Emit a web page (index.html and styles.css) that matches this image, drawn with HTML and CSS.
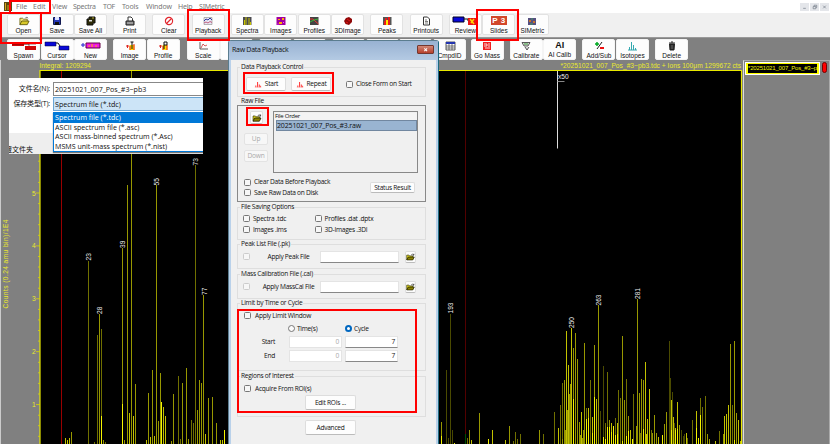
FILE: index.html
```html
<!DOCTYPE html>
<html lang="en">
<head>
<meta charset="utf-8">
<title>Raw Data Playback</title>
<link rel="stylesheet" href="styles.css">
</head>
<body>
<svg class="defs" width="0" height="0">
  <symbol id="folder" viewBox="0 0 12 10"><path d="M1 9V2h3l1 1h4v2" fill="#f5e87a" stroke="#6d6510" stroke-width=".9"/><path d="M1 9l2-4h8L9 9z" fill="#d8c929" stroke="#57500a" stroke-width=".9"/><path d="M7 1.500q2-1.500 3 .5" fill="none" stroke="#333" stroke-width=".7"/></symbol>
  <symbol id="darkfolder" viewBox="0 0 12 10"><path d="M1 9V2.500h3l1 1h4V5" fill="#e7dd20" stroke="#333000" stroke-width=".9"/><path d="M1 9l2-4h8L9 9z" fill="#8b8200" stroke="#222000" stroke-width="1"/><path d="M7 2q2-2 3.500 .5M10.500 .5v2H9" fill="none" stroke="#111" stroke-width=".8"/></symbol>
  <symbol id="redbars" viewBox="0 0 8 8"><path d="M1.500 7V5M3.500 7V1M5.500 7V4M7 7V5.500" stroke="#ff3b3b" stroke-width="1.200"/><path d="M0 7h8" stroke="#ff8a8a" stroke-width=".6"/></symbol>
</svg>
<div class="app">
  <div class="menubar">
    <svg class="appicon" viewBox="0 0 8 9"><path d="M0 0h8v9H0z" fill="#5a4a10"/><path d="M1.500 1v7M4 3v5M6 1v7" stroke="#d9a820"/></svg>
    <span class="m-file">File</span><span class="m-edit">Edit</span><span class="m-view">View</span><span class="m-spectra">Spectra</span><span class="m-tof">TOF</span><span class="m-tools">Tools</span><span class="m-window">Window</span><span class="m-help">Help</span><span class="m-si">SIMetric</span>
    <div class="winbtns"><i><svg viewBox="0 0 9 9"><path d="M3 6h3"/></svg></i><i><svg viewBox="0 0 9 9"><path d="M3 4h3v2.500H3zM4 4V2.500h3V5H6"/></svg></i><i><svg viewBox="0 0 9 9"><path d="M3 3l3 3M6 3L3 6"/></svg></i></div>
  </div>

  <div class="toolbar main">
    <div class="tb"><svg viewBox="0 0 14 10"><use href="#folder" x="2" width="11" height="10"/></svg>Open</div>
    <div class="tb"><svg viewBox="0 0 14 10"><path d="M3.500 1.500h7v7h-7z" fill="#2638b8" stroke="#101850"/><path d="M5 1h4v3H5z" fill="#dfe4ff"/><path d="M5 6h4v3H5z" fill="#111"/></svg>Save</div>
    <div class="tb"><svg viewBox="0 0 14 10"><path d="M5 1h6v6H9v2H3V3h2z" fill="#2d2b08" stroke="#111"/><path d="M5 4h3v1.500H5z" fill="#ddd"/><path d="M8 2h2" stroke="#b5ae30"/></svg>Save All</div>
    <div class="tb gap6"><svg viewBox="0 0 14 10"><path d="M5 5V1h3l1.500 1.500V5" fill="#fff" stroke="#333"/><path d="M3 5h8v4H3z" fill="#777" stroke="#222"/><path d="M4 7h6" stroke="#ddd" stroke-width=".7"/></svg>Print</div>
    <div class="tb gap6"><svg viewBox="0 0 14 10"><circle cx="7" cy="5" r="3.600" fill="#fff" stroke="#e2262d" stroke-width="1.200"/><path d="M9.500 2.500l-5 5" stroke="#e2262d" stroke-width="1.200"/></svg>Clear</div>
    <div class="tb gap6"><svg viewBox="0 0 14 10"><path d="M3 1.500h8v7H3z" fill="#e8e8f5" stroke="#888" stroke-width=".6"/><path d="M3 5l2-2 2 1 2-2 2 2" fill="none" stroke="#3038a0"/><path d="M3 7l2-1 2 1 2-1.500 2 1" fill="none" stroke="#c26080"/></svg>Playback</div>
    <div class="tb gap6"><svg viewBox="0 0 14 10"><path d="M3 1h8.500v8H3z" fill="#4b4b50"/><path d="M4.500 9V4M6 9V1M9 9V2M10.500 9V6" stroke="#c8c400"/></svg>Spectra</div>
    <div class="tb"><svg viewBox="0 0 14 10"><path d="M2.500 1h9v8h-9z" fill="#a000a0"/><path d="M4 3h2v1H4zM8 2h2v2H8zM5 6h3v2H5z" fill="#ffb000"/><path d="M9 6l1 1M3.500 8h1" stroke="#f5f"/></svg>Images</div>
    <div class="tb"><svg viewBox="0 0 14 10"><path d="M3 1h8.500v8H3z" fill="#444"/><path d="M3 3h3l2 2 3.500 3" fill="none" stroke="#e33"/><path d="M3 6l4-2 4-1" fill="none" stroke="#39b839"/></svg>Profiles</div>
    <div class="tb"><svg viewBox="0 0 14 10"><path d="M5 2l3-1 3 2v3L8 9 4.500 8 3 5z" fill="#8f0808"/><path d="M6 3l3 2M5 6l2 1" stroke="#e41414"/></svg>3DImage</div>
    <div class="tb gap6"><svg viewBox="0 0 14 10"><path d="M3 1h8.500v8H3z" fill="#555"/><path d="M4 9V5h1V2h2v3h1V1h2v8z" fill="#e81c1c"/><path d="M6 9V4h2v5z" fill="#ffe800"/></svg>Peaks</div>
    <div class="tb gap6"><svg viewBox="0 0 14 10"><path d="M4.500 1h4l2 2v6h-6z" fill="#fff" stroke="#333"/><path d="M6 4h2M6 5.500h3M6 7h3" stroke="#444" stroke-width=".7"/></svg>Printouts</div>
    <div class="tb gap6"><svg class="wide" viewBox="0 0 26 10"><path d="M1 1h11v5H1z" fill="#0808d8" stroke="#002"/><path d="M12 3h4v2" fill="none" stroke="#111"/><path d="M16 2h8v7h-8z" fill="#e81515"/><path d="M18 3l4 5M22 3l-3 4" stroke="#ffd500" stroke-width="1.500"/></svg>Review</div>
    <div class="tb"><div class="ppt"><b>P</b><b>3</b></div>Slides</div>
    <div class="tb"><svg viewBox="0 0 14 10"><path d="M3 2h8v7H3z" fill="#575080"/><path d="M4 4h2v2H4zM8 5h2v2H8z" fill="#c9722a"/><path d="M6 3h2M5 8h3" stroke="#47a060"/></svg>SIMetric</div>
  </div>

  <div class="toolbar second">
    <div class="tb"><svg class="wide" viewBox="0 0 26 10"><path d="M1 1h12v4H1z" fill="#d00808"/><path d="M14 5h11v4H14z" fill="#d00808"/><path d="M13 3h5v2M1 3h24" fill="none" stroke="#400" stroke-width=".6"/></svg>Spawn</div>
    <div class="tb"><svg class="wide" viewBox="0 0 26 10"><path d="M1 1h11v4H1zM15 5h10v4H15z" fill="#0808d8" stroke="#003" stroke-width=".5"/><path d="M12 2h2l2 3" fill="none" stroke="#111"/></svg>Cursor</div>
    <div class="tb"><svg class="wide" viewBox="0 0 26 10"><path d="M3 4h4M5 2v4" stroke="#2020d0"/><path d="M8 2h14v5H8z" fill="#f014e8" stroke="#604"/><path d="M11 6V4M14 6V3M18 6V4" stroke="#ffb900"/></svg>New</div>
    <div class="tb gap6"><svg viewBox="0 0 14 10"><path d="M3 5h3M4.500 4v3" stroke="#d22"/><path d="M6.500 9V4h5v5z" fill="#ffe000"/><path d="M7 9V5M11 9V3" stroke="#e22"/><path d="M9 8V1M7.500 1h3" stroke="#111"/></svg>Image</div>
    <div class="tb"><svg viewBox="0 0 14 10"><path d="M3 5h3M4.500 4v3" stroke="#d22"/><path d="M6.500 9V4h5v5z" fill="#ffe000"/><path d="M7 9V5M11 9V4" stroke="#e22"/><path d="M8 8V1h3v3H8" fill="none" stroke="#111"/></svg>Profile</div>
    <div class="tb gap7"><svg viewBox="0 0 14 10"><path d="M4 1v7h8" fill="none" stroke="#333" stroke-width=".8"/><path d="M5 7l2-4 2 2 2-1" fill="none" stroke="#c33" stroke-width=".8"/></svg>Scale</div>
    <div class="tb"></div><div class="tb gap6"></div><div class="tb"></div><div class="tb gap6"></div><div class="tb"></div><div class="tb fill"></div>
    <div class="tb cmp"><svg viewBox="0 0 14 10"><path d="M3 1h9v8H3z" fill="#fff" stroke="#333" stroke-width=".8"/><path d="M3 2h9" stroke="#2436b0" stroke-width="2"/><path d="M3 5h9M3 7h9M6 3v6M9 3v6" stroke="#444" stroke-width=".7"/></svg>CmpdID</div>
    <div class="tb gap4"><svg viewBox="0 0 14 10"><path d="M3 1h8v8H3z" fill="#ef2020"/><path d="M4 3h3v2H4M9 2v4M5 7h5" fill="none" stroke="#fff" stroke-width=".8"/></svg>Go Mass</div>
    <div class="tb gap6"><svg viewBox="0 0 14 10"><path d="M3 1.500h8L9 5H5zM6 6l2 3 2-3" fill="#ddd" stroke="#333" stroke-width=".8"/><path d="M5 3h4" stroke="#393"/></svg>Calibrate</div>
    <div class="tb"><div class="ai">AI</div>AI Calib</div>
    <div class="tb gap6"><svg viewBox="0 0 14 10"><path d="M3 3h4M5 1v4" stroke="#0a2" stroke-width="1.500"/><path d="M10 1L5 8" stroke="#222"/><path d="M8 7h4" stroke="#e11" stroke-width="2"/></svg>Add/Sub</div>
    <div class="tb"><svg viewBox="0 0 14 10"><path d="M3 9h9M4.500 9V6M6.500 9V1M8.500 9V4M10.500 9V7" stroke="#35a9b0"/></svg>Isotopes</div>
    <div class="tb gap6"><svg viewBox="0 0 14 10"><path d="M4 2h6M6 1h2M4.500 3h5L9 9H5z" fill="#222" stroke="#222"/><path d="M6.300 4v4M7.700 4v4" stroke="#888" stroke-width=".5"/></svg>Delete</div>
  </div>

  <div class="workspace">
    <div class="plotpane">
      <svg class="plot" id="plot" viewBox="0 60 743 384" width="743" height="384">
        <path d="M40 71h702v373H40z" fill="#000"/>
        <path d="M61.500 71V444" stroke="#990000"/>
        <path d="M465.500 71V444" stroke="#520000"/>
        <g id="bars"></g>
        <path d="M40 444V70.500H741.500V444" fill="none" stroke="#e8e800" stroke-width="1.200"/>
        <g id="ticks"></g>
        <path d="M557.500 71V148.500" stroke="#ddd"/><path d="M557.500 81.500h7" stroke="#888"/>
        <text x="558" y="79" class="white">x50</text>
        <text x="39.500" y="68" class="yl" textLength="51.500">Integral: 1209294</text>
        <text x="560.500" y="68" class="yl" textLength="180.500">*20251021_007_Pos_#3~pb3.tdc + Ions 100μm 1299672 cts</text>
        <text transform="translate(7.500 308.500) rotate(-90)" class="yl" textLength="89">Counts (0.24 amu bin)/1E4</text>
        <path d="M.5 60V444" stroke="#ccc"/>
      </svg>
    </div>
    <div class="side">
      <div class="chip"><span>*20251021_007_Pos_#3~p</span></div>
      <div class="dot"></div>
    </div>
  </div>

  <div class="filepop">
    <div class="frow"><label>文件名(N):</label><div class="fld">20251021_007_Pos_#3~pb3</div></div>
    <div class="frow type"><label>保存类型(T):</label><div class="fld sel">Spectrum file (*.tdc)</div></div>
    <div class="flow">
      <div class="hide">藏文件夹</div>
      <div class="opts"><div class="on">Spectrum file (*.tdc)</div><div>ASCII spectrum file (*.asc)</div><div>ASCII mass-binned spectrum (*.Asc)</div><div>MSMS unit-mass spectrum (*.nist)</div></div>
    </div>
  </div>

  <div class="dialog">
    <div class="title"><span>Raw Data Playback</span><div class="close"><svg viewBox="0 0 17 9"><path d="M7 3l3.500 3.500M10.500 3L7 6.500" stroke="#fff" stroke-width="1.300"/></svg></div></div>
    <div class="body">
      <div class="group g1"><h4>Data Playback Control</h4>
        <div class="row"><div class="btn b40"><svg viewBox="0 0 8 8"><use href="#redbars"/></svg>Start</div><div class="btn b40"><svg viewBox="0 0 8 8"><use href="#redbars"/></svg>Repeat</div><i class="cb"></i><span>Close Form on Start</span></div>
      </div>
      <div class="group g2"><h4>Raw File</h4>
        <div class="row top">
          <div class="ctl"><div class="btn fold"><svg viewBox="0 0 12 10"><use href="#darkfolder"/></svg></div><div class="btn dis">Up</div><div class="btn dis">Down</div></div>
          <div class="list"><div class="lh">File Order</div><div class="li">20251021_007_Pos_#3.raw</div></div>
        </div>
        <div class="row chk"><div><p><i class="cb"></i>Clear Data Before Playback</p><p><i class="cb"></i>Save Raw Data on Disk</p></div><div class="btn status">Status Result</div></div>
      </div>
      <div class="group g3"><h4>File Saving Options</h4>
        <div class="opt"><p><i class="cb"></i>Spectra .tdc</p><p><i class="cb"></i>Profiles .dat .dptx</p><p><i class="cb"></i>Images .ims</p><p><i class="cb"></i>3D-Images .3DI</p></div>
      </div>
      <div class="group g4"><h4>Peak List File (.pk)</h4>
        <div class="row"><i class="cb faint"></i><span class="ap">Apply Peak File</span><div class="inp w79"></div><div class="btn fb"><svg viewBox="0 0 12 10"><use href="#darkfolder"/></svg></div></div>
      </div>
      <div class="group g5"><h4>Mass Calibration File (.cal)</h4>
        <div class="row"><i class="cb faint"></i><span class="ap">Apply MassCal File</span><div class="inp w79"></div><div class="btn fb"><svg viewBox="0 0 12 10"><use href="#darkfolder"/></svg></div></div>
      </div>
      <div class="group g6"><h4>Limit by Time or Cycle</h4>
        <p class="lim"><i class="cb"></i>Apply Limit Window</p>
        <div class="radios"><p><i class="rd"></i>Time(s)</p><p><i class="rd on"></i>Cycle</p></div>
        <div class="nums"><span>Start</span><div class="inp off">0</div><div class="inp">7</div></div>
        <div class="nums"><span>End</span><div class="inp off">0</div><div class="inp">7</div></div>
      </div>
      <div class="group g7"><h4>Regions of Interest</h4>
        <p class="lim"><i class="cb"></i>Acquire From ROI(s)</p>
        <div class="btn wide51">Edit ROIs ...</div>
      </div>
      <div class="btn wide51 adv">Advanced</div>
    </div>
  </div>

  <div class="mark k1"></div><div class="mark k2"></div><div class="mark k3"></div><div class="mark k4"></div><div class="mark k5"></div><div class="mark k6"></div><div class="mark k7"></div>
</div>
<script src="plot.js"></script>
</body>
</html>
```
FILE: styles.css
```css
* { box-sizing: border-box; }
body { margin: 0; overflow: hidden; background: #808080; }
p, h4 { margin: 0; font-weight: normal; }
.defs { position: absolute; }
.app { position: relative; width: 830px; height: 444px; display: flex; flex-direction: column; overflow: hidden; font-family: "Open Sans", "Noto Sans", sans-serif; font-size: 6.600px; color: #111; }

.menubar { height: 13px; flex: none; background: #fff; display: flex; align-items: center; padding-left: 4px; color: #777; font: 7px/13px "Noto Sans", sans-serif; white-space: nowrap; }
.menubar span { flex: none; }
.appicon { width: 8px; height: 9px; margin-right: 4px; flex: none; }
.m-file { width: 17px; } .m-edit { width: 19px; } .m-view { width: 21px; } .m-spectra { width: 30px; letter-spacing: -.3px; } .m-tof { width: 19px; letter-spacing: -.3px; } .m-tools { width: 24px; letter-spacing: -.1px; } .m-window { width: 32px; letter-spacing: -.1px; } .m-help { width: 21px; letter-spacing: -.2px; }
.m-si { letter-spacing: -.2px; }
.winbtns { margin-left: auto; display: flex; gap: 1px; padding-right: 1px; }
.winbtns i { width: 9px; height: 8px; background: #e4e6ea; display: block; }
.winbtns svg { display: block; width: 9px; height: 8px; fill: none; stroke: #777f8a; stroke-width: .8; }

.toolbar { flex: none; display: flex; padding-left: 7px; font: 6.500px/8px "Liberation Sans", sans-serif; }
.main { height: 24px; background: #f0f0f0; padding-top: 1px; }
.second { height: 23px; background: #808080; padding-top: 1px; border-top: 1px solid #999; }
.tb { width: 33px; margin-right: .5px; height: 21px; flex: none; background: #fdfdfd; border: 1px solid #e2e2e2; border-radius: 2px; display: flex; flex-direction: column; align-items: center; white-space: nowrap; }
.second .tb { border-color: #f4f4f4; }
.tb svg { width: 14px; height: 10px; margin: .5px 0 1.500px; flex: none; }
.tb svg.wide { width: 26px; }
.gap4 { margin-left: 4px; } .gap6 { margin-left: 5.700px; } .gap7 { margin-left: 6.500px; }
.fill { width: 32.500px; }
.cmp { margin-left: 1px; }
.ppt { width: 16px; height: 9px; margin: 1px 0 2px; background: #d2472a; display: flex; justify-content: space-around; color: #fff; font: 8px/9px "Liberation Sans", sans-serif; }
.ai { height: 12px; font: bold 9px/10px "Liberation Sans", sans-serif; }

.workspace { flex: 1; display: flex; background: #808080; }
.plotpane { width: 743px; flex: none; }
.plot { display: block; font-family: "Liberation Sans", sans-serif; font-size: 6.600px; }
.yl { fill: #eaea2c; }
.white { fill: #f0f0f0; }
.side { flex: 1; border-left: 1px solid #ddd; border-right: 1px solid #aaa; border-top: 1px solid #aaa; display: flex; padding: 1px 1px 0; gap: 2px; }
.chip { width: 75px; height: 13px; border: 1px solid #fff; padding: 1px; background: #ff0; flex: none; }
.chip span { display: block; height: 9px; margin: 0 1px; background: #000; color: #f4f400; font: 6px/9px "Liberation Sans", sans-serif; white-space: nowrap; letter-spacing: -.18px; }
.dot { width: 5px; height: 11px; border-radius: 3px; background: #f00; border: .5px solid #700; flex: none; }

.filepop { position: absolute; left: 9px; top: 78px; width: 194px; height: 76px; background: #fff; overflow: hidden; font-size: 7.100px; line-height: 10px; padding-top: 3px; font-family: "Open Sans", "Noto Sans CJK SC", sans-serif; white-space: nowrap; }
.frow { display: flex; height: 15px; align-items: center; }
.frow.type { height: 16px; }
.frow label { width: 44px; padding-right: 3px; text-align: right; flex: none; font-size: 7px; letter-spacing: -.15px; }
.fld { flex: 1; height: 14px; border: 1px solid #888; border-right: 0; line-height: 12px; padding-left: 1px; }
.sel { background: #cce4f7; border-color: #69a5d5; }
.flow { display: flex; height: 42px; background: linear-gradient(#fff 21px, #eee 21px); }
.hide { width: 44px; flex: none; font-size: 7px; line-height: 8px; align-self: flex-end; text-indent: -4px; }
.opts { flex: 1; height: 40px; border: 1px solid #0078d7; border-width: 0 0 1px 1px; background: #fff; line-height: 9.600px; box-shadow: 0 1px 1px #777; }
.opts div { padding-left: 1px; height: 9.700px; }
.opts .on { background: #0078d7; color: #fff; height: 10.500px; line-height: 11px; }

.dialog { position: absolute; left: 228px; top: 40px; width: 211px; height: 406px; background: #b9d1ea; border: 1px solid #5b7d8f; border-right-color: #1c6a80; border-radius: 3px 3px 0 0; padding: 0 2px; line-height: 8px; white-space: nowrap; letter-spacing: -.26px; }
.title { height: 19px; margin: 0 -2px; padding: 4px 4px 0 3px; display: flex; justify-content: space-between; background: linear-gradient(#98b2d2, #b4cae3); font-size: 7px; line-height: 10px; letter-spacing: -.28px; }
.close { width: 17px; height: 9px; background: linear-gradient(#d08878, #b8402c); border: 1px solid #74372f; border-radius: 1px; }
.close svg { display: block; width: 15px; height: 7px; }
.body { height: 386px; background: #f0f0f0; padding: 7px 10px 0 6px; display: flex; flex-direction: column; }
.group { position: relative; border: 1px solid #dedede; flex: none; }
.group h4 { position: absolute; left: 2px; top: -5px; padding: 0 1px; background: #f0f0f0; }
.g1 { height: 30px; }
.g2 { height: 97px; margin: 8px 0 5px; border: 1px solid #888; }
.g2 h4 { top: -9px; }
.g3 { height: 33px; }
.g4 { height: 25px; margin-top: 4px; }
.g5 { height: 25px; margin-top: 5px; }
.g6 { height: 68px; margin-top: 4px; }
.g7 { height: 41px; margin-top: 5px; }
.row { display: flex; align-items: center; }
.btn { background: #fdfdfd; border: 1px solid #ddd; border-bottom-color: #bbb; border-radius: 2px; display: flex; align-items: center; justify-content: center; flex: none; }
.cb { display: block; flex: none; width: 7px; height: 7px; border: 1px solid #777; border-radius: 1.500px; background: #f7f7f7; }
.cb.faint { border-color: #ccc; }
.g1 .row { padding: 9px 0 0 8px; }
.b40 { width: 40px; height: 14px; gap: 3px; margin-right: 5px; }
.b40 svg { width: 8px; height: 7px; }
.g1 .cb { margin: 0 3px 0 10px; }
.top { align-items: flex-start; padding: 5px 0 0 6px; }
.ctl { width: 29px; display: flex; flex-direction: column; }
.fold { width: 13px; height: 13px; margin: 0 0 9px 6px; }
.fold svg, .fb svg { width: 10px; height: 8px; }
.dis { width: 24px; height: 12px; margin-bottom: 5px; color: #aaa; border-color: #e3e3e3; background: #f7f7f7; }
.list { width: 145px; height: 62px; border: 1px solid #888; padding: 1px 0 0 1px; }
.lh { background: #f4f4f4; height: 7px; line-height: 7px; font-size: 6px; }
.li { margin-left: 1px; height: 11px; background: #99b4d1; border: 1px solid #7187a0; font-size: 7px; line-height: 9px; letter-spacing: -.15px; }
.chk { justify-content: space-between; padding: 4px 10px 0 6px; }
.chk p, .opt p, .lim, .radios p { display: flex; align-items: center; }
.chk p { height: 10.500px; gap: 3px; }
.status { width: 45px; height: 11px; }
.opt { display: grid; grid-template-columns: 71.500px 1fr; grid-auto-rows: 11px; padding: 5px 0 0 5px; }
.opt p { gap: 3px; }
.g4 .row, .g5 .row { padding: 5px 0 0 5px; height: 18px; }
.ap { width: 65px; margin-left: 4px; text-align: center; padding-left: 4px; }
.inp { height: 12px; background: #fff; border: 1px solid #e4e4e4; border-bottom-color: #888; text-align: right; padding-right: 2px; line-height: 10px; }
.w79 { width: 79px; margin: 0 6px 0 1px; }
.fb { width: 11px; height: 12px; }
.lim { gap: 4px; padding-left: 6px; height: 23px; }
.g7 .lim { height: 22px; padding-top: 1px; }
.radios { display: flex; padding-left: 50px; height: 9px; margin-top: -3px; }
.radios p { width: 57px; gap: 2px; }
.rd { width: 7px; height: 7px; flex: none; border-radius: 50%; border: 1px solid #777; background: #fafafa; }
.rd.on { border: 2px solid #0067c0; background: #fff; }
.nums { display: flex; margin-top: 2.500px; align-items: center; }
.nums span { width: 51px; padding-right: 14px; text-align: right; }
.nums .inp { width: 53px; margin-right: 3px; }
.nums .off { color: #aaa; border-bottom-color: #e4e4e4; }
.wide51 { width: 51px; height: 15px; margin: -4px auto 0 67px; }
.adv { margin: 3px 0 0 68px; }

.mark { position: absolute; border: 2px solid #f00; }
.k1 { left: 9px; top: 0; width: 42px; height: 14px; }
.k2 { left: 0; top: 12px; width: 42px; height: 32px; }
.k3 { left: 187px; top: 9px; width: 43px; height: 32px; }
.k4 { left: 476px; top: 9px; width: 43px; height: 32px; }
.k5 { left: 243px; top: 72px; width: 91px; height: 22px; }
.k6 { left: 246px; top: 107px; width: 23px; height: 19px; }
.k7 { left: 236.500px; top: 309px; width: 180px; height: 104px; }
```
FILE: plot.js
```js
// Peaks as [x, top] pairs, grouped by the shade they are drawn in.
const peaks = {
  "#4a4a00": [[446,370],[450.2,314],[448.5,438],[452.3,430],[669,341],[670.8,378],[672.600,392],[681.5,430],[684,434],[603.5,366],[600.7,411],[674.5,423],[683,436]],
  "#707000": [[88.5,261],[97,335],[195.2,165],[101.5,329],[191,420],[193,423],[178,376],[180.4,439],[515.6,432],[517.6,439],[520,434],[467.4,438],[513.5,441],[543.4,434],[554.4,412],[560.4,405],[562.5,383],[590.5,380],[618.5,390],[620.5,398],[633.5,394],[607.4,372],[626.4,379],[700.6,398],[702.7,407],[705,396],[692,420],[719.4,431],[732.5,405],[615.4,418],[605.4,423],[586,408],[651.5,430],[687.5,438],[94.7,442],[105.5,442],[640.5,433]],
  "#989800": [[99.2,314],[122.4,248],[127,185],[131.3,71],[156.5,185],[203.5,295],[71.5,432],[103.5,440],[124.5,440],[135.4,384],[148.4,393],[152.5,370],[160.5,373],[173.5,394],[182.5,383],[186.4,368],[197.4,410],[199.4,380],[201.4,383],[208,398],[212.4,397],[216.5,423],[158.4,421],[171.5,441],[188.6,439],[441.3,422],[469.3,430],[479.5,413],[509.4,426],[539.4,430],[564.4,380],[565.5,430],[567.4,410],[569.5,394],[570.4,384],[573.5,348],[575.4,333],[577.5,359],[584.4,343],[579.4,422],[580.5,435],[582.5,438],[583.5,430],[594.4,345],[598.5,305],[622.4,336],[624.4,400],[628.5,416],[636,426],[637.4,299],[639.5,393],[641.5,379],[643.4,380],[654.4,415],[656.4,433],[664.5,424],[666.4,412],[679.4,425],[709.5,439],[707.4,434],[734.4,341],[736.4,413],[730.5,344],[723.4,434],[609.4,420],[652.5,433],[562.5,439],[564,438]],
  "#c2c200": [[65.3,438],[67.3,440],[69.3,438],[129.4,413],[133.4,416],[146.5,440],[150.4,437],[154.4,436],[163.4,407],[165.4,416],[205.5,434],[220.4,440],[222.5,440],[471.4,440],[492.4,430],[505.4,440],[558.4,428],[566.4,331],[568.5,365],[571.4,328],[581.4,412],[588.4,408],[592.4,417],[596.4,399],[645.5,362],[647.5,419],[649.5,389],[658.4,437],[671.4,400],[673.4,417],[675.5,428],[677.4,402],[686.4,433],[696.4,411],[715.4,441],[724.4,416],[726.4,414],[728.5,405],[738.5,420],[740.4,441],[611.4,423],[617.4,423],[630.4,430],[646.5,434]],
  "#f4f400": [[101.5,416],[122.6,404],[161.8,402],[224.4,430],[441.3,436],[454,443],[488.4,439],[573.5,399],[594.4,397],[603.5,437],[607.4,427],[609.4,427],[613.4,426],[617.4,434],[611.4,432],[586.5,419],[588.4,418],[592.4,433],[626.4,436],[628.5,431],[632.4,439],[643.4,429],[662.4,435],[675.5,430],[671.4,430],[698.5,438],[700.4,415],[734.4,440],[622.4,441],[605.4,439],[615,435],[677.4,429],[696.4,428]],
  "#005000": [[465.5,434]]
};
const labels = [["23",90.5,260.5],["28",102,314],["39",125,248],["55",159,185.5],["73",197.5,165.5],["77",206.5,295],["193",453,313.5],["250",573.5,328],["263",601,305.5],["281",640,299]];
let bars = "";
for (const [shade, list] of Object.entries(peaks)) {
  bars += `<path stroke="${shade}" d="${list.map(([x, y]) => `M${Math.floor(x) + 0.5} 444V${y}`).join("")}"/>`;
}
for (const [name, x, y] of labels) {
  bars += `<text class="white" transform="translate(${x} ${y}) rotate(-90)">${name}</text>`;
}
document.getElementById("bars").innerHTML = bars;

let ticks = "";
for (let i = 1; i < 35; i++) {
  const y = 446.9 - i * 10.58;
  ticks += `<path stroke="#d8d800" stroke-width=".8" d="M${i % 5 === 4 ? 36 : 38} ${y.toFixed(1)}H40"/>`;
}
for (let n = 1; n < 7; n++) {
  ticks += `<text class="yl" x="32" y="${(457.5 - n * 52.9 + 2.5).toFixed(1)}">${n}</text>`;
}
document.getElementById("ticks").innerHTML = ticks;
```
